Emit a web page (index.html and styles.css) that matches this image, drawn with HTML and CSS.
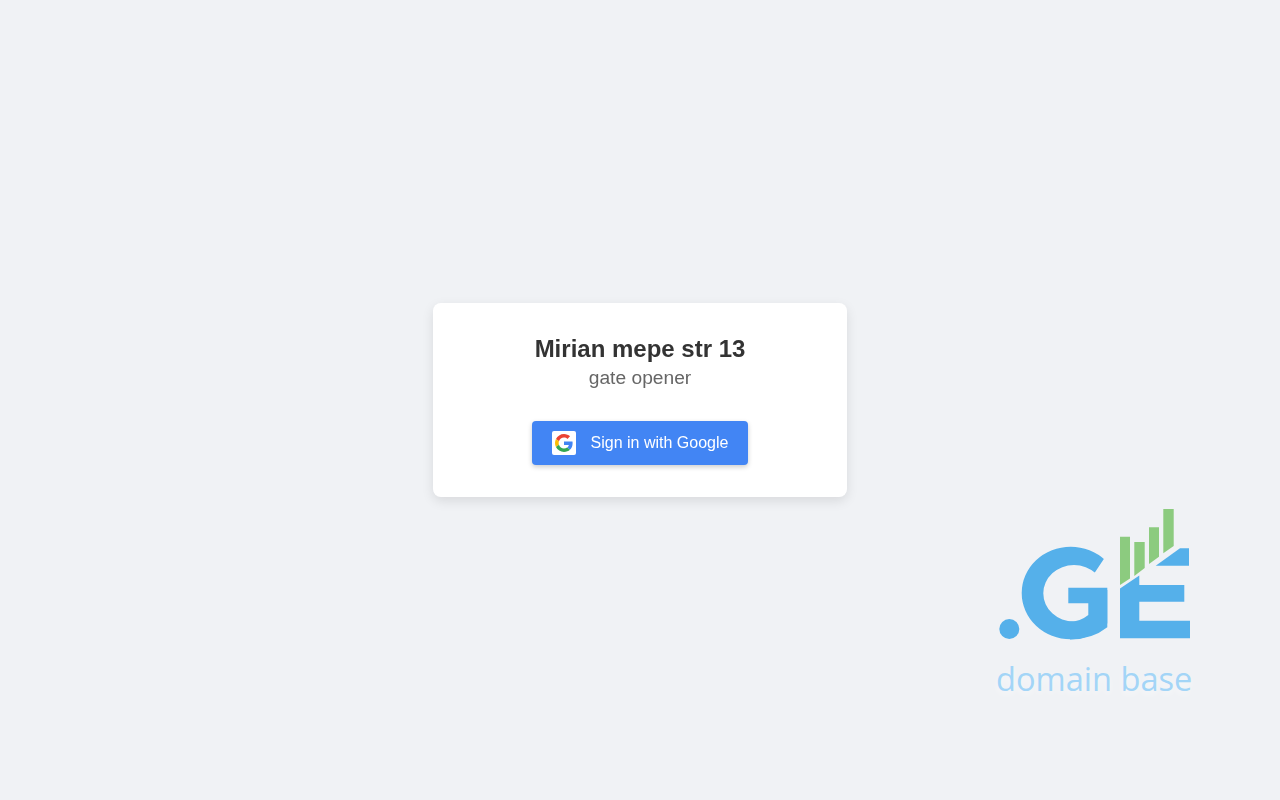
FILE: index.html
```html
<!DOCTYPE html>
<html lang="en">
<head>
<meta charset="utf-8">
<title>Mirian mepe str 13</title>
<link rel="stylesheet" href="styles.css">
</head>
<body>
<main class="card">
  <h1 class="title">Mirian mepe str 13</h1>
  <p class="subtitle">gate opener</p>
  <a class="google-btn" href="#">
    <span class="google-icon">
      <svg width="18" height="18" viewBox="0 0 48 48">
        <path fill="#EA4335" d="M24 9.5c3.54 0 6.71 1.22 9.21 3.6l6.85-6.85C35.9 2.38 30.47 0 24 0 14.62 0 6.51 5.38 2.56 13.22l7.98 6.19C12.43 13.72 17.74 9.5 24 9.5z"/>
        <path fill="#4285F4" d="M46.98 24.55c0-1.57-.15-3.09-.38-4.55H24v9.02h12.94c-.58 2.96-2.26 5.48-4.78 7.18l7.73 6c4.51-4.18 7.09-10.36 7.09-17.65z"/>
        <path fill="#FBBC05" d="M10.53 28.59c-.48-1.45-.76-2.99-.76-4.59s.27-3.14.76-4.59l-7.98-6.19C.92 16.46 0 20.12 0 24c0 3.88.92 7.54 2.56 10.78l7.97-6.19z"/>
        <path fill="#34A853" d="M24 48c6.48 0 11.93-2.13 15.89-5.81l-7.73-6c-2.15 1.45-4.92 2.3-8.16 2.3-6.26 0-11.57-4.22-13.47-9.91l-7.98 6.19C6.51 42.62 14.62 48 24 48z"/>
      </svg>
    </span>
    <span>Sign in with Google</span>
  </a>
</main>
<aside class="brand">
  <svg class="brand-mark" width="230" height="165" viewBox="0 0 230 165" role="img" aria-label=".GE logo">
    <defs>
      <clipPath id="ring-clip">
        <polygon points="30,40 136.5,40 115,72.3 100,90 127.3,90 127.3,145 30,145"/>
      </clipPath>
    </defs>
    <circle class="fill-blue" cx="29.3" cy="129" r="10"/>
    <path class="fill-blue" clip-path="url(#ring-clip)" fill-rule="evenodd" d="M41.7 93a49 46.3 0 1 0 98 0a49 46.3 0 1 0-98 0ZM63.3 93.3a30.7 28.3 0 1 0 61.4 0a30.7 28.3 0 1 0-61.4 0Z"/>
    <path class="fill-blue" d="M88.3 87.7H127.3V127.3Q112 139.5 90 139.5V121.7Q100 121.7 108.3 115V103.3H88.3Z"/>
    <path class="fill-blue" d="M140 88.5 159.3 75.5V85H204.3V101.7H159.3V120.7H210V138.3H140Z"/>
    <path class="fill-blue" d="M175.7 65.7 200 48.3H209V65.7Z"/>
    <path class="fill-green" d="M140 36.7H150V78.5L140 85Z"/>
    <path class="fill-green" d="M154.3 42H164.7V68L154.3 76Z"/>
    <path class="fill-green" d="M169 27.3H179V56.7L169 64Z"/>
    <path class="fill-green" d="M183.3 9H193.7V46L183.3 53.3Z"/>
  </svg>
  <div class="brand-text">domain base</div>
</aside>
</body>
</html>
```
FILE: styles.css
```css
html, body {
  margin: 0;
  height: 100%;
}
body {
  background: #f0f2f5;
  font-family: "Liberation Sans", Arial, sans-serif;
  display: flex;
  align-items: center;
  justify-content: center;
  position: relative;
  overflow: hidden;
}
.card {
  width: 414px;
  height: 194px;
  box-sizing: border-box;
  padding: 32px 40px;
  background: #fff;
  border-radius: 8px;
  box-shadow: 0 4px 12px rgba(0, 0, 0, 0.1);
  display: flex;
  flex-direction: column;
  align-items: center;
  will-change: transform;
}
.title {
  margin: 0;
  font-size: 24px;
  line-height: 28px;
  font-weight: 700;
  color: #333;
}
.subtitle {
  margin: 4px 0 0;
  font-size: 19.2px;
  line-height: 22px;
  color: #666;
}
.google-btn {
  margin-top: 32px;
  height: 44px;
  box-sizing: border-box;
  padding: 0 19.5px 0 20px;
  display: flex;
  align-items: center;
  gap: 14.5px;
  background: #4285f4;
  color: #fff;
  font-size: 16px;
  text-decoration: none;
  border-radius: 4px;
  box-shadow: 0 2px 5px rgba(0, 0, 0, 0.2);
}
.google-icon {
  width: 24px;
  height: 24px;
  background: #fff;
  border-radius: 2px;
  display: flex;
  align-items: center;
  justify-content: center;
}
.brand {
  position: absolute;
  left: 980px;
  top: 500px;
  width: 230px;
}
.brand-mark {
  display: block;
}
.fill-blue {
  fill: #55b0ea;
}
.fill-green {
  fill: #8ccb7f;
}
.brand-text {
  margin-top: -9px;
  padding-left: 16px;
  font-family: "Open Sans", sans-serif;
  font-size: 32.6px;
  line-height: 46px;
  color: #a3d5f7;
  white-space: nowrap;
  text-shadow: 0 3px 6px rgba(255, 255, 255, 0.6);
}
```
